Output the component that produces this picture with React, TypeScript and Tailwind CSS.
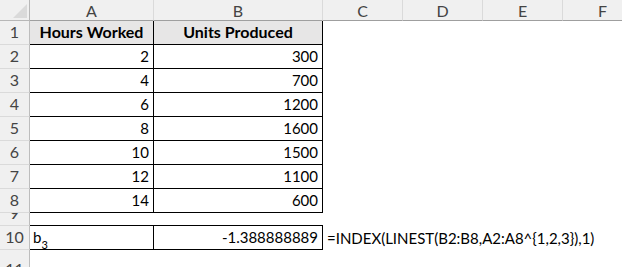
import React from 'react';

const cols = ['A', 'B', 'C', 'D', 'E', 'F'];

const rows: { n: number; h: string; a?: React.ReactNode; b?: React.ReactNode; c?: React.ReactNode; kind: string }[] = [
  { n: 1, h: 'h-[24px]', a: 'Hours Worked', b: 'Units Produced', kind: 'head' },
  { n: 2, h: 'h-[24px]', a: '2', b: '300', kind: 'data' },
  { n: 3, h: 'h-[24px]', a: '4', b: '700', kind: 'data' },
  { n: 4, h: 'h-[24px]', a: '6', b: '1200', kind: 'data' },
  { n: 5, h: 'h-[24px]', a: '8', b: '1600', kind: 'data' },
  { n: 6, h: 'h-[24px]', a: '10', b: '1500', kind: 'data' },
  { n: 7, h: 'h-[24px]', a: '12', b: '1100', kind: 'data' },
  { n: 8, h: 'h-[24px]', a: '14', b: '600', kind: 'data' },
  { n: 9, h: 'h-[13px]', kind: 'gap' },
  {
    n: 10,
    h: 'h-[24px]',
    a: (
      <span>
        b<sub className="text-[11px] align-[-3px]">3</sub>
      </span>
    ),
    b: '-1.388888889',
    c: '=INDEX(LINEST(B2:B8,A2:A8^{1,2,3}),1)',
    kind: 'result',
  },
  { n: 11, h: 'h-[24px]', kind: 'empty' },
];

export default function App() {
  return (
    <div
      className="w-[622px] h-[267px] overflow-hidden bg-white text-[15px] text-black"
      style={{ fontFamily: 'Lato, "Open Sans", sans-serif' }}
    >
      <div className="grid grid-cols-[30px_124px_169px_80px_80px_80px_80px] w-[643px]">
        {/* column headers */}
        <div className="h-[21px] bg-[#f0f0f0] border-b border-r border-[#b7b7b7] relative">
          <svg className="absolute right-[2px] bottom-[2px]" width="14" height="14" viewBox="0 0 14 14">
            <polygon points="14,0 14,14 0,14" fill="#dadada" />
          </svg>
        </div>
        {cols.map((c) => (
          <div
            key={c}
            className="h-[21px] bg-[#f0f0f0] border-b border-b-[#9f9f9f] border-r border-r-[#dadada] flex items-end justify-center pb-[1px] leading-none text-[#444] text-[16px]"
          >
            {c}
          </div>
        ))}

        {rows.map((r) => (
          <React.Fragment key={r.n}>
            <div
              className={`${r.h} bg-[#f0f0f0] border-r border-r-[#bdbdbd] border-b border-b-[#dadada] flex items-end justify-center overflow-hidden leading-none text-[#444] text-[16px] pb-[4px]`}
            >
              <span className={r.n === 11 ? '-mb-[8px]' : ''}>{r.n}</span>
            </div>
            {r.kind === 'head' && (
              <>
                <div className={`${r.h} bg-[#e7e6e6] border-r border-b border-black flex items-end justify-center font-bold text-[16px] leading-none pb-[4px]`}>
                  {r.a}
                </div>
                <div className={`${r.h} bg-[#e7e6e6] border-r border-b border-black flex items-end justify-center font-bold text-[16px] leading-none pb-[4px]`}>
                  {r.b}
                </div>
              </>
            )}
            {r.kind === 'data' && (
              <>
                <div className={`${r.h} border-r border-b border-black flex items-end justify-end px-[4px] leading-none pb-[4px]`}>
                  {r.a}
                </div>
                <div className={`${r.h} border-r border-b border-black flex items-end justify-end px-[4px] leading-none pb-[4px]`}>
                  {r.b}
                </div>
              </>
            )}
            {r.kind === 'gap' && (
              <>
                <div className={`${r.h} border-b border-black`} />
                <div className={`${r.h} border-b border-black`} />
              </>
            )}
            {r.kind === 'result' && (
              <>
                <div className={`${r.h} border-r border-b border-black flex items-end justify-start px-[3px] leading-none pb-[4px]`}>
                  {r.a}
                </div>
                <div className={`${r.h} border-r border-b border-black flex items-end justify-end px-[4px] leading-none pb-[4px]`}>
                  {r.b}
                </div>
              </>
            )}
            {r.kind === 'empty' && (
              <>
                <div className={r.h} />
                <div className={r.h} />
              </>
            )}
            {r.c ? (
              <div className={`${r.h} flex items-end justify-start pl-[4px] leading-none pb-[4px] whitespace-nowrap`}>
                <span className="w-0 overflow-visible">{r.c}</span>
              </div>
            ) : (
              <div className={r.h} />
            )}
            <div className={r.h} />
            <div className={r.h} />
            <div className={r.h} />
          </React.Fragment>
        ))}
      </div>
    </div>
  );
}
